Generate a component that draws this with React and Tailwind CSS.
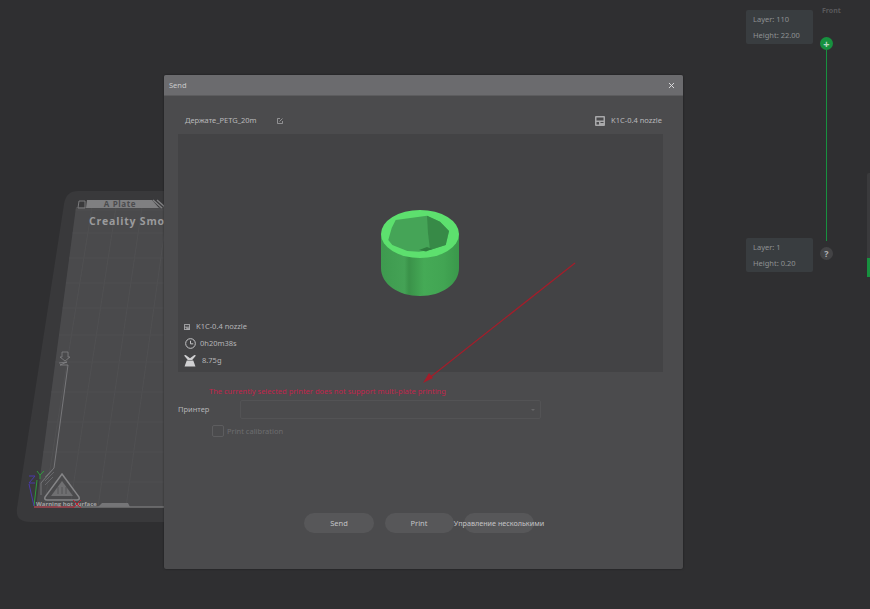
import { X } from "lucide-react";

const font = { fontFamily: '"Noto Sans", "Noto Sans CJK SC", sans-serif' };

function Plate() {
  const verticals = [[84, 36], [108, 62], [134, 90], [160, 118]];
  const horizontals = [210, 233, 258, 283, 308, 335, 362, 392, 422, 452, 482];
  return (
    <svg className="absolute left-0 top-0" width="220" height="530" viewBox="0 0 220 530">
      <path d="M78 191 H170 V522 H30 Q15 522 17 508 L64 204 Q66 191 78 191 Z" fill="#39393b" />
      <path d="M76 207 H170 V507 H36 Z" fill="#4a4a4c" />
      {verticals.map(([a, b]) => (
        <line key={a} x1={a + 8} y1="207" x2={b + 8} y2="507" stroke="#505052" strokeWidth="1" />
      ))}
      {horizontals.map((y) => (
        <line key={y} x1={76 - ((y - 207) * 40) / 300} y1={y} x2="170" y2={y} stroke="#4f4f51" strokeWidth="1" />
      ))}
      <path d="M78 208 L79 201 H85 L85 208 Z" fill="none" stroke="#7a7a7c" strokeWidth="1" />
      <path d="M87 200 H152 L159 208 H86 Z" fill="#7f7f81" />
      <path d="M153 200 L162 208 M157 200 L166 208" stroke="#808082" strokeWidth="1.5" />
      <text x="120" y="207" textAnchor="middle" fontSize="8" fontWeight="700" fill="#4b4b4d" letterSpacing="0.6" style={{ fontFamily: '"Open Sans", sans-serif' }}>A Plate</text>
      <text x="89" y="225" fontSize="10.5" fontWeight="700" fill="#9b9b9d" letterSpacing="0.8" style={{ fontFamily: '"Open Sans", sans-serif' }}>Creality Smooth</text>
      <path d="M62 352 H68 V357 H70 L65 361 L60 357 H62 Z" fill="none" stroke="#88888a" strokeWidth="0.7" />
      <path d="M59 363 L67 362 L60 365 L68 365" fill="none" stroke="#969698" strokeWidth="0.6" />
      <path d="M68 365 L54 468 L41 483 V495" fill="none" stroke="#969698" strokeWidth="0.6" />
      <path d="M45 477 L53 469 M45 481 L54 472 M45 485 L53 477" stroke="#6f6f72" strokeWidth="0.8" />
      <path d="M62 474 L79 497 Q80 500 77 500 H47 Q44 500 45 497 Z" fill="none" stroke="#858587" strokeWidth="1.5" />
      <path d="M62 481 L73 496 H51 Z" fill="#6f6f71" />
      <path d="M58 487 V494 M62 487 V494 M66 487 V494" stroke="#4f4f51" strokeWidth="0.8" />
      <path d="M98 507 L102 503 H128 L130 507 Z" fill="#757577" />
      <line x1="34" y1="507" x2="170" y2="507" stroke="#747476" strokeWidth="1.5" />
      <text x="36" y="506" fontSize="6" fontWeight="700" fill="#a2a2a4" style={{ fontFamily: '"Open Sans", sans-serif' }}>Warning hot surface</text>
      <line x1="34" y1="507" x2="74" y2="507" stroke="#b02030" strokeWidth="1" />
      <path d="M73 500 L81 508 M81 500 L73 508" stroke="#c02030" strokeWidth="1" />
      <line x1="34" y1="506" x2="37" y2="480" stroke="#2f9a3c" strokeWidth="1" />
      <path d="M37 471 L40 475 L44 471 M40 475 V479" fill="none" stroke="#2f9a3c" strokeWidth="1" />
      <line x1="34" y1="506" x2="29" y2="484" stroke="#4a3aa8" strokeWidth="1" />
      <path d="M29 476 H35 L29 483 H35" fill="none" stroke="#4a3aa8" strokeWidth="1" />
    </svg>
  );
}

function Cup() {
  return (
    <svg width="80" height="88" viewBox="0 0 80 88" className="block">
      <defs>
        <linearGradient id="wall" x1="0" x2="1" y1="0" y2="0">
          <stop offset="0" stopColor="#3e9a4f" />
          <stop offset="0.3" stopColor="#44a255" />
          <stop offset="0.36" stopColor="#3a9249" />
          <stop offset="0.55" stopColor="#45aa56" />
          <stop offset="0.8" stopColor="#42a553" />
          <stop offset="1" stopColor="#3a984b" />
        </linearGradient>
      </defs>
      <path d="M1 25 V59 C1 75 18 87 40 87 C62 87 79 75 79 59 V25 Z" fill="url(#wall)" />
      <ellipse cx="40" cy="25" rx="39" ry="24" fill="#5de06e" />
      <path d="M15.7 11 L47 6.7 L60 12.7 L69 22 L65.7 36 L50 41 L39 42.7 L27.3 42 L12.3 36 L8.3 31 L11.7 19 Z" fill="#45a457" />
      <path d="M47 6.7 L60 12.7 L69 22 L65.7 36 L50 41 L48 24 Z" fill="#378a47" />
      <path d="M39 41 L47 38 L52 40 L46 42.5 Z" fill="#2f7d3f" />
    </svg>
  );
}

function PrinterIcon({ className }) {
  return (
    <svg className={className} viewBox="0 0 10 10">
      <rect x="0" y="0" width="10" height="10" rx="1" fill="#a8a8aa" />
      <rect x="1.5" y="1.5" width="7" height="3" fill="#4a4a4c" />
      <rect x="1.5" y="6" width="2.5" height="2.5" fill="#4a4a4c" />
      <rect x="5.5" y="6" width="3" height="1" fill="#4a4a4c" />
    </svg>
  );
}

function Send() {
  return (
    <div className="absolute left-[164px] top-[75px] flex h-[494px] w-[519px] flex-col rounded-[2px] bg-[#4b4b4d] shadow-[0_0_2px_#00000080] text-[7.5px]">
      <div className="flex h-[21px] items-center justify-between rounded-t-[2px] border-b border-[#5c5c5e] bg-[#6b6b6e] pl-[5px] pr-[7px] text-[#c9c9cb]">
        <span className="pt-[1px]">Send</span>
        <X size={9} strokeWidth={2.5} className="text-[#e0e0e2]" />
      </div>
      <div className="flex h-[38px] items-center justify-between pl-[21px] pr-[21px] pt-[12px] text-[#b9b9bb]">
        <div className="flex items-center">
          <span>Держате_PETG_20m</span>
          <svg className="ml-[20px] h-[6px] w-[6px]" viewBox="0 0 6 6" fill="none" stroke="#b0b0b2" strokeWidth="0.7">
            <path d="M3 .5 H.5 V5.5 H5.5 V3 M2.5 3.5 L5.5 .5" />
          </svg>
        </div>
        <div className="flex items-center gap-[6px]">
          <PrinterIcon className="h-[10px] w-[10px]" />
          <span>K1C-0.4 nozzle</span>
        </div>
      </div>
      <div className="relative mx-[14px] flex h-[238px] w-[485px] items-start justify-center bg-[#434345] pt-[75px]">
        <div className="ml-[-1px]">
          <Cup />
        </div>
        <div className="absolute bottom-[3px] left-[6px] flex flex-col text-[#b5b5b7]">
          <div className="flex h-[16px] items-center">
            <PrinterIcon className="mr-[6px] h-[6px] w-[6px]" />
            <span>K1C-0.4 nozzle</span>
          </div>
          <div className="flex h-[17px] items-center">
            <svg className="ml-[1px] mr-[4px] h-[11px] w-[11px]" viewBox="0 0 10 10" fill="none" stroke="#c4c4c6" strokeWidth="0.9">
              <circle cx="5" cy="5" r="4.4" />
              <path d="M5 2.5 V5.3 H7.5" />
            </svg>
            <span>0h20m38s</span>
          </div>
          <div className="flex h-[17px] items-center">
            <svg className="mr-[6px] h-[12px] w-[12px]" viewBox="0 0 11 11" fill="#d0d0d2">
              <path d="M0 .5 L1.5 0 L5.5 3 L9.5 0 L11 .5 L7.5 4.5 H3.5 Z" />
              <path d="M2.5 5 H8.5 L10.5 10.5 H.5 Z" />
            </svg>
            <span>8.75g</span>
          </div>
        </div>
      </div>
      <div className="pl-[45px] pt-[13px] leading-[12px] text-[#c2244c]">
        The currently selected printer does not support multi-plate printing
      </div>
      <div className="mt-[3px] flex h-[19px] items-center pl-[14px] text-[#b5b5b7]">
        <span className="w-[62px]">Принтер</span>
        <div className="flex h-[19px] w-[301px] items-center justify-end rounded-[2px] border border-[#535355] pr-[5px]">
          <span className="h-0 w-0 border-x-[2px] border-t-[2px] border-x-transparent border-t-[#666668]"></span>
        </div>
      </div>
      <div className="mt-[6px] flex items-center pl-[48px] text-[#6d6d6f]">
        <span className="mr-[3px] h-[12px] w-[12px] rounded-[2px] border border-[#5d5d5f]"></span>
        <span className="pt-[1px]">Print calibration</span>
      </div>
      <div className="mt-[76px] flex gap-[10.5px] pl-[140px] text-[#c4c4c6]">
        <button className="flex h-[20px] w-[70px] items-center justify-center rounded-full bg-[#575759]">Send</button>
        <button className="flex h-[20px] w-[69px] items-center justify-center rounded-full bg-[#575759]">Print</button>
        <button className="flex h-[20px] w-[70px] items-center justify-center whitespace-nowrap rounded-full bg-[#575759] text-[7.2px]">Управление несколькими</button>
      </div>
    </div>
  );
}

function LayerBox({ layer, height }) {
  return (
    <div className="flex h-[34px] w-[67px] flex-col justify-between whitespace-nowrap rounded-[2px] bg-[#393d40] px-[7px] py-[3px] text-[7.5px] leading-[12px] text-[#8f9193]">
      <span>Layer: {layer}</span>
      <span>Height: {height}</span>
    </div>
  );
}

export default function App() {
  return (
    <div className="relative h-[609px] w-[870px] overflow-hidden bg-[#2f2f31]" style={font}>
      <Plate />
      <div className="absolute left-[746px] top-[10px] flex">
        <LayerBox layer="110" height="22.00" />
      </div>
      <span className="absolute left-[822px] top-[6px] text-[7px] font-bold text-[#59595b]">Front</span>
      <div className="absolute left-[820px] top-[37px] flex h-[204px] w-[13px] flex-col items-center">
        <div className="flex h-[13px] w-[13px] items-center justify-center rounded-full bg-[#17913f] text-[11px] font-bold leading-none text-[#b8d8c2]">+</div>
        <div className="w-[1px] flex-1 bg-[#17913f]"></div>
      </div>
      <div className="absolute left-[746px] top-[238px]">
        <LayerBox layer="1" height="0.20" />
      </div>
      <div className="absolute left-[820px] top-[247px] flex h-[13px] w-[13px] items-center justify-center rounded-full bg-[#434345] text-[9px] font-bold text-[#b0b0b2]">?</div>
      <div className="absolute left-[867px] top-[173px] h-[104px] w-[3px] rounded-l-[2px] bg-[#3a3a3c]">
        <div className="mt-[85px] h-[19px] w-[3px] bg-[#17913f]"></div>
      </div>
      <Send />
      <svg className="absolute left-[415px] top-[255px]" width="170" height="135" viewBox="0 0 170 135">
        <line x1="160" y1="8" x2="13" y2="124" stroke="#a51d2a" strokeWidth="1.2" />
        <path d="M8 128 L18 123 L14 118 Z" fill="#a51d2a" />
      </svg>
    </div>
  );
}
